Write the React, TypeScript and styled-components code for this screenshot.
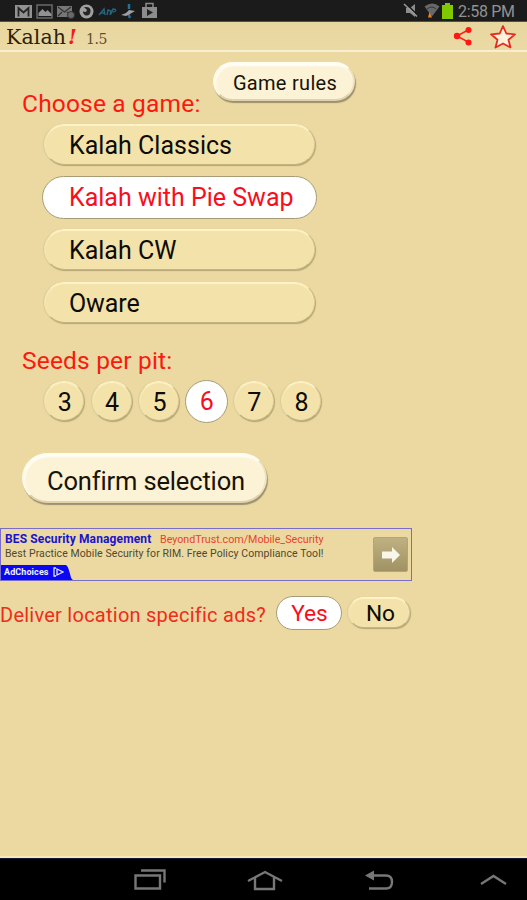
import React, { useState } from 'react';
import styled, { createGlobalStyle, css } from 'styled-components';

const GlobalStyle = createGlobalStyle`
  * { box-sizing: border-box; }
  body { margin: 0; background: #ebd9a1; font-family: Roboto, sans-serif; }
  button { font-family: inherit; padding: 0; margin: 0; border: 0; cursor: pointer; }
`;

const Screen = styled.div`
  display: flex;
  flex-direction: column;
  width: 527px;
  height: 900px;
  overflow: hidden;
  background: #ebd9a1;
  white-space: nowrap;
`;

const StatusBar = styled.header`
  display: flex;
  justify-content: space-between;
  height: 22px;
  flex: none;
  background: #1b1b1b;
  border-bottom: 1px solid #555040;
`;

const Drawing = styled.svg`
  display: block;
  flex: none;
`;

const StatusRight = styled.div`
  display: flex;
`;

const Clock = styled.time`
  width: 70px;
  padding-left: 1px;
  color: #929292;
  font-size: 16px;
  line-height: 24px;
  letter-spacing: -0.3px;
`;

const TitleBar = styled.div`
  display: flex;
  height: 30px;
  flex: none;
  padding-left: 6px;
  border-bottom: 2px solid #f8eed0;
  background: linear-gradient(#e8d69f, #ebdaa5);
  font-family: 'DejaVu Serif', serif;
  color: #2c220d;
`;

const AppName = styled.h1`
  margin: 0;
  font-size: 20.5px;
  font-weight: 400;
  line-height: 30px;
  letter-spacing: 0.1px;
`;

const Bang = styled.span`
  width: 20px;
  padding-left: 2px;
  color: #fb1712;
  font-size: 20px;
  font-style: italic;
  font-weight: 700;
  line-height: 30px;
`;

const Version = styled.span`
  flex: 1;
  color: #5b4f35;
  font-size: 14px;
  line-height: 34px;
  letter-spacing: -0.4px;
`;

const Main = styled.main`
  display: flex;
  flex-direction: column;
  align-items: flex-start;
  flex: 1;
  padding-top: 9px;
  border-bottom: 2px solid #f6e9b7;
`;

const TopRow = styled.div`
  display: flex;
  width: 357px;
  height: 62px;
  padding-left: 22px;
  justify-content: space-between;
`;

const Heading = styled.h2<{ $drop: number }>`
  margin: ${p => p.$drop}px 0 0;
  height: 30px;
  color: #fc1a10;
  font-size: 24.5px;
  font-weight: 400;
  line-height: 30px;
  letter-spacing: 0.18px;
`;

const raised = css`
  background: #fcf2d5;
  border: 2px solid;
  border-color: #fffdf2 #efe2bd #e0d2ab #fff8e2;
  box-shadow: 1px 2px 1px #9c9070, inset 1px 2px 2px #fffef9;
`;

const flat = css`
  background: #f3e2aa;
  border: 1px solid;
  border-color: #fff5c8 #dccb94 #c4b482 #f1e2b2;
  box-shadow: inset 0 1px 1px #fff4c8, 1px 1px 1px #b5a575, -1px 0 1px #ddcb95;
  color: #0d0b04;
`;

const chosen = css`
  background: #fff;
  border: 1px solid #a79c78;
  color: #fa0d1c;
`;

const RulesButton = styled.button`
  ${raised}
  width: 142px;
  height: 39px;
  margin: 1px 2px 0 0;
  padding-left: 2px;
  border-radius: 20px;
  color: #171307;
  font-size: 20px;
  line-height: 38px;
  letter-spacing: 0.3px;
`;

const GameList = styled.div`
  display: flex;
  flex-direction: column;
  gap: 8.7px;
  padding-left: 42px;
`;

const GameOption = styled.button<{ $on: boolean; $track: number }>`
  ${p => (p.$on ? chosen : flat)}
  width: ${p => (p.$on ? 275 : 271)}px;
  height: ${p => (p.$on ? 43 : 41)}px;
  margin: ${p => (p.$on ? '0 0 1px' : '1px 0 2px 2px')};
  padding-left: ${p => (p.$on ? 26 : 24)}px;
  border-radius: 22px;
  font-size: 25px;
  line-height: 42px;
  letter-spacing: ${p => p.$track}px;
  text-align: left;
`;

const SeedSection = styled.div`
  margin-top: 21px;
  padding-left: 22px;
`;

const SeedRow = styled.div`
  display: flex;
  align-items: center;
  height: 44px;
  margin-top: 3px;
  padding-left: 40.5px;
`;

const SeedCell = styled.div`
  display: flex;
  justify-content: center;
  width: 47.4px;
`;

const Seed = styled.button<{ $on: boolean }>`
  ${p => (p.$on ? chosen : flat)}
  width: ${p => (p.$on ? 43 : 40)}px;
  height: ${p => (p.$on ? 43 : 40)}px;
  padding-left: 1px;
  border-radius: 50%;
  font-size: 25px;
  line-height: 41px;
  text-align: center;
`;

const ConfirmButton = styled.button`
  ${raised}
  width: 245px;
  height: 50px;
  margin: 30px 0 0 22px;
  padding: 1px 0 0 3px;
  border-radius: 26px;
  color: #171307;
  font-size: 25.5px;
  line-height: 51px;
  letter-spacing: -0.15px;
`;

const AdBanner = styled.section`
  display: flex;
  justify-content: space-between;
  width: 412px;
  height: 53px;
  margin-top: 25px;
  border: 1px solid #7a6cc9;
`;

const AdCopy = styled.div`
  display: flex;
  flex-direction: column;
`;

const AdHead = styled.div`
  display: flex;
  height: 19px;
  padding-left: 4px;
  line-height: 21px;
`;

const AdTitle = styled.strong`
  width: 155px;
  color: #1a13cf;
  font-size: 12px;
  letter-spacing: 0.13px;
`;

const AdLink = styled.span`
  color: #e8442c;
  font-size: 10.7px;
`;

const AdText = styled.div`
  height: 17px;
  padding-left: 4px;
  color: #51482e;
  font-size: 10.5px;
  line-height: 12px;
  letter-spacing: 0.08px;
`;

const AdChoices = styled.div`
  display: flex;
  align-items: center;
  gap: 4px;
  width: 74px;
  height: 16px;
  padding-left: 3px;
  background: #0a07f3;
  clip-path: path('M0 0H62C67 0 67 3 69 9C70 14 71 16 74 16H0Z');
  color: #f2f0ff;
  font-size: 9px;
  font-weight: 700;
  letter-spacing: 0.1px;
`;

const AdArrow = styled.button`
  display: flex;
  align-items: center;
  justify-content: center;
  width: 35px;
  height: 35px;
  margin: 8px 3px 0 0;
  border: 1px solid #b3a57b;
  border-radius: 2px;
  background: linear-gradient(#c0b183, #a09263);
`;

const LocationRow = styled.div`
  display: flex;
  align-items: flex-start;
  margin-top: 14px;
`;

const LocationLabel = styled.span`
  width: 276px;
  color: #f02c1b;
  font-size: 20px;
  line-height: 40px;
  letter-spacing: 0.25px;
`;

const Choice = styled.button<{ $on: boolean }>`
  ${p => (p.$on ? chosen : flat)}
  width: ${p => (p.$on ? 66 : 62)}px;
  height: ${p => (p.$on ? 34 : 31)}px;
  margin: ${p => (p.$on ? '1px 0 0' : '2px 0 0 6px')};
  padding-left: ${p => (p.$on ? 1 : 3)}px;
  border-radius: 18px;
  font-size: 22.7px;
  line-height: ${p => (p.$on ? 34 : 32)}px;
`;

const NavBar = styled.nav`
  display: flex;
  height: 42px;
  flex: none;
  background: #000;
  border-top: 1px solid #15153a;
`;

const games = [
  { name: 'Kalah Classics', track: 0.02 },
  { name: 'Kalah with Pie Swap', track: 0 },
  { name: 'Kalah CW', track: 0 },
  { name: 'Oware', track: -0.1 },
];

function Notifications() {
  return (
    <Drawing width="170" height="21" viewBox="0 0 170 21" fill="none">
      <path d="M15 5h17v13H15z" fill="#929292" />
      <path d="M18.500 16.500V8l5 4.500 5-4.500v8.500" stroke="#252525" strokeWidth="1.800" />
      <path d="M37 5h15v13H37z" stroke="#696969" strokeWidth="1.500" />
      <path d="M38.500 16V13l4-4 3 3 2-2 4 4v2z" fill="#929292" />
      <path d="M57 6h15v11H57z" fill="#777" />
      <path d="m58 7 6.500 5 6.500-5M58 16l4-4m9 4-4-4" stroke="#333" strokeWidth="1.300" />
      <circle cx="71" cy="15" r="3.500" fill="#696969" stroke="#333" />
      <circle cx="86.500" cy="11.500" r="7" fill="#a0a0a0" />
      <path d="M86 7q5 0 4.500 4.500T86 15.500q-3-1-3-4l3 .5 1-2-3-3" fill="#252525" />
      <path d="m99 15 5-6 1 6m-4-2h4m2 2 1-5 3 1-1 4m1-1 2-5c4 0 3 3 0 3" stroke="#26627b" strokeWidth="1.500" />
      <path d="m129 4v5m-1 4 2 5" stroke="#257294" strokeWidth="2.500" />
      <path d="m121 15 5-2 3-3 6 1-5 3-4 2z" fill="#a0a0a0" />
      <path d="M142 7h15v11h-15z" fill="#8c8c8c" />
      <path d="M146 7V3.500h7V7" stroke="#8c8c8c" strokeWidth="1.500" />
      <path d="m147 9 6 3.500-6 3.500z" fill="#222" />
    </Drawing>
  );
}

function Indicators() {
  return (
    <Drawing width="54" height="21" viewBox="403 0 54 21" fill="none">
      <path d="M406 8h4l5-4v13l-5-4h-4z" fill="#8c8c8c" />
      <path d="m405.500 3 13 13" stroke="#1b1b1b" strokeWidth="1.500" />
      <path d="m404 4 13 12.500" stroke="#9b9b9b" strokeWidth="1.500" />
      <path d="M424.500 6.500q8-6 15 0l-7.500 10z" fill="#686868" />
      <path d="M427 9q5-4 9 0" stroke="#333" />
      <path d="m429.500 12 2.500 5.500h-4z" fill="#e78424" />
      <path d="M442 5h3V3h5v2h3v14h-11z" fill="#80c900" />
    </Drawing>
  );
}

function TitleActions() {
  return (
    <Drawing width="77" height="28" viewBox="450 22 77 28" fill="none">
      <path d="m469 29.500-12 6.500 12 6.500" stroke="#ff2116" strokeWidth="1.500" />
      <circle cx="468.500" cy="30" r="3" fill="#ff1712" />
      <circle cx="457" cy="36" r="3.200" fill="#ff1712" />
      <circle cx="468.500" cy="42.500" r="3" fill="#ff1712" />
      <path d="m503 26 3.300 7.500 8.700.8-6.500 5.400 2 7.800-7.500-4-7.500 4 2-7.800-6.500-5.400 8.700-.8z" fill="#fff2d9" stroke="#e62c1f" strokeWidth="1.800" strokeLinejoin="round" />
    </Drawing>
  );
}

export default function App() {
  const [game, setGame] = useState('Kalah with Pie Swap');
  const [seeds, setSeeds] = useState(6);
  const [ads, setAds] = useState('Yes');
  return (
    <>
      <GlobalStyle />
      <Screen>
        <StatusBar>
          <Notifications />
          <StatusRight>
            <Indicators />
            <Clock>2:58 PM</Clock>
          </StatusRight>
        </StatusBar>
        <TitleBar>
          <AppName>Kalah</AppName>
          <Bang>!</Bang>
          <Version>1.5</Version>
          <TitleActions />
        </TitleBar>
        <Main>
          <TopRow>
            <Heading $drop={28}>Choose a game:</Heading>
            <RulesButton>Game rules</RulesButton>
          </TopRow>
          <GameList>
            {games.map(g => (
              <GameOption key={g.name} $on={g.name === game} $track={g.track} onClick={() => setGame(g.name)}>
                {g.name}
              </GameOption>
            ))}
          </GameList>
          <SeedSection>
            <Heading $drop={0}>Seeds per pit:</Heading>
          </SeedSection>
          <SeedRow>
            {[3, 4, 5, 6, 7, 8].map(n => (
              <SeedCell key={n}>
                <Seed $on={n === seeds} onClick={() => setSeeds(n)}>{n}</Seed>
              </SeedCell>
            ))}
          </SeedRow>
          <ConfirmButton>Confirm selection</ConfirmButton>
          <AdBanner>
            <AdCopy>
              <AdHead>
                <AdTitle>BES Security Management</AdTitle>
                <AdLink>BeyondTrust.com/Mobile_Security</AdLink>
              </AdHead>
              <AdText>Best Practice Mobile Security for RIM. Free Policy Compliance Tool!</AdText>
              <AdChoices>
                AdChoices
                <Drawing width="11" height="10" viewBox="0 0 11 10" fill="none" stroke="#e5e3ff" strokeWidth="1.300">
                  <path d="M3 1H1v8h2M4 2l6 3-6 3z" />
                </Drawing>
              </AdChoices>
            </AdCopy>
            <AdArrow aria-label="Open">
              <Drawing width="20" height="18" viewBox="0 0 20 18" fill="#f8f5eb">
                <path d="M1 5.500h10V1l8 8-8 8v-4.500H1z" />
              </Drawing>
            </AdArrow>
          </AdBanner>
          <LocationRow>
            <LocationLabel>Deliver location specific ads?</LocationLabel>
            {['Yes', 'No'].map(c => (
              <Choice key={c} $on={c === ads} onClick={() => setAds(c)}>{c}</Choice>
            ))}
          </LocationRow>
        </Main>
        <NavBar>
          <Drawing width="527" height="41" viewBox="0 859 527 41" fill="none" stroke="#777" strokeWidth="2.400">
            <path d="M135.500 875.500h24.500v13h-24.500zM141 870.500h23.500v12" />
            <path d="m248 881 17-9 17 9M255 877v12h19v-12" />
            <path d="M369 875.500h17q6 0 6 6.500t-6 6.500h-17" />
            <path d="m365 875.500 9-5v10z" fill="#777" stroke="none" />
            <path d="m481 884 12.500-8 12.500 8" />
          </Drawing>
        </NavBar>
      </Screen>
    </>
  );
}
